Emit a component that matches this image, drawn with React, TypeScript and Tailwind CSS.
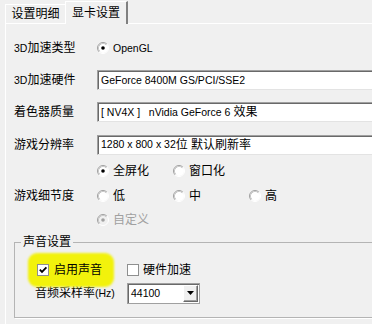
import React from 'react';

const Radio: React.FC<{ checked?: boolean; disabled?: boolean }> = ({ checked, disabled }) => (
  <svg width="12" height="12" viewBox="0 0 12 12" className="shrink-0">
    <circle cx="6" cy="6" r="5" fill={disabled ? '#f0f0f0' : '#ffffff'} />
    <path d="M2.11 9.89 A5.5 5.5 0 0 1 9.89 2.11" fill="none" stroke="#a0a0a0" />
    <path d="M2.11 9.89 A5.5 5.5 0 0 0 9.89 2.11" fill="none" stroke="#ffffff" />
    <path d="M2.82 9.18 A4.5 4.5 0 0 1 9.18 2.82" fill="none" stroke="#c8c8c8" />
    {checked && <circle cx="6" cy="6" r="1.8" fill={disabled ? '#a0a0a0' : '#000000'} />}
  </svg>
);

const Check: React.FC<{ checked?: boolean }> = ({ checked }) => (
  <svg width="12" height="12" viewBox="0 0 12 12" className="shrink-0">
    <rect x="0.5" y="0.5" width="11" height="11" fill="#ffffff" stroke="#8e8f8f" />
    {checked && <path d="M2.8 5.6 L5 7.9 L9.4 3.4" fill="none" stroke="#000000" strokeWidth="1.8" />}
  </svg>
);

const Field: React.FC<{ children: React.ReactNode }> = ({ children }) => (
  <div className="w-[300px] h-[20px] bg-white border-t border-l border-t-[#a0a0a0] border-l-[#a0a0a0] border-b border-r border-b-[#e3e3e3] border-r-[#e3e3e3] shadow-[inset_1px_1px_0_#696969] flex items-center pl-[3px] text-[10.5px] whitespace-nowrap">
    {children}
  </div>
);

const Row: React.FC<{ label: React.ReactNode; children: React.ReactNode; h: string }> = ({ label, children, h }) => (
  <div className={`flex items-center ${h}`}>
    <div className="w-[91px] pl-[8px] shrink-0 whitespace-nowrap">{label}</div>
    {children}
  </div>
);

const Opt: React.FC<{ label: string; checked?: boolean; disabled?: boolean; w?: string }> = ({ label, checked, disabled, w = 'w-[76px]' }) => (
  <div className={`flex items-center gap-[4px] ${w} ${disabled ? 'text-[#a0a0a0]' : ''}`}>
    <Radio checked={checked} disabled={disabled} />
    <span>{label}</span>
  </div>
);

export default function App() {
  return (
    <div
      className="w-[372px] h-[324px] overflow-hidden bg-[#f0f0f0] text-black text-[12px] leading-none"
      style={{ fontFamily: '"Liberation Sans", "Noto Sans CJK SC", sans-serif' }}
    >
      {/* tabs */}
      <div className="flex items-end h-[23px] pl-[5px]">
        <div className="h-[19px] w-[60px] flex items-center justify-center border-t border-l border-white">设置明细</div>
        <div className="relative z-10 -mb-[1px] h-[23px] w-[63px] flex items-center justify-center bg-[#f0f0f0] border-t border-l border-white border-r-2 border-r-[#808080]">
          显卡设置
        </div>
      </div>

      {/* panel */}
      <div className="ml-[5px] w-[420px] h-[320px] border-t border-l border-white pt-[8px]">
        <Row h="h-[32px]" label={<><span className="text-[10.5px]">3D</span>加速类型</>}>
          <div className="flex items-center gap-[4px]">
            <Radio checked />
            <span className="text-[10.5px]">OpenGL</span>
          </div>
        </Row>
        <Row h="h-[32px]" label={<><span className="text-[10.5px]">3D</span>加速硬件</>}>
          <Field>GeForce 8400M GS/PCI/SSE2</Field>
        </Row>
        <Row h="h-[32px]" label="着色器质量">
          <Field>
            [ NV4X ]&nbsp;&nbsp;&nbsp;nVidia GeForce 6 <span className="text-[12px] ml-[3px]">效果</span>
          </Field>
        </Row>
        <Row h="h-[33px]" label="游戏分辨率">
          <Field>
            1280 x 800 x 32<span className="text-[12px]">位 默认刷新率</span>
          </Field>
        </Row>
        <Row h="h-[20px]" label="">
          <Opt label="全屏化" checked />
          <Opt label="窗口化" />
        </Row>
        <Row h="h-[25px] mt-[2px]" label="游戏细节度">
          <Opt label="低" />
          <Opt label="中" />
          <Opt label="高" />
        </Row>
        <Row h="h-[24px]" label="">
          <Opt label="自定义" checked disabled />
        </Row>

        {/* sound group */}
        <fieldset className="ml-[8px] mt-[2px] w-[400px] border border-[#b4b4b4] shadow-[1px_1px_0_#ffffff] pb-[13px]">
          <legend className="ml-[6px] px-[2px] leading-[17px]">声音设置</legend>
          <div className="relative flex items-center h-[22px] mt-[8px]">
            <div className="absolute left-[13px] top-[-6px] w-[86px] h-[34px] rounded-[9px] bg-[#f2f20c] blur-[1px]" />
            <div className="relative flex items-center gap-[5px] pl-[22px] w-[112px]">
              <Check checked />
              <span>启用声音</span>
            </div>
            <div className="relative flex items-center gap-[4px]">
              <Check />
              <span>硬件加速</span>
            </div>
          </div>
          <div className="flex items-center h-[22px] mt-[1px]">
            <div className="pl-[20px] w-[112px] whitespace-nowrap">
              音频采样率<span className="text-[10.5px]">(Hz)</span>
            </div>
            <div className="w-[73px] h-[21px] bg-white border border-[#a0a0a0] shadow-[inset_1px_1px_0_#696969] flex items-center justify-between pl-[3px] pr-[1px]">
              <span className="text-[10.5px]">44100</span>
              <div className="w-[15px] h-[17px] bg-[#f0f0f0] border border-t-white border-l-white border-b-[#696969] border-r-[#696969] shadow-[inset_-1px_-1px_0_#a0a0a0] flex items-center justify-center">
                <svg width="7" height="4" viewBox="0 0 7 4">
                  <path d="M0 0 H7 L3.5 4 Z" fill="#000000" />
                </svg>
              </div>
            </div>
          </div>
        </fieldset>
      </div>
    </div>
  );
}
